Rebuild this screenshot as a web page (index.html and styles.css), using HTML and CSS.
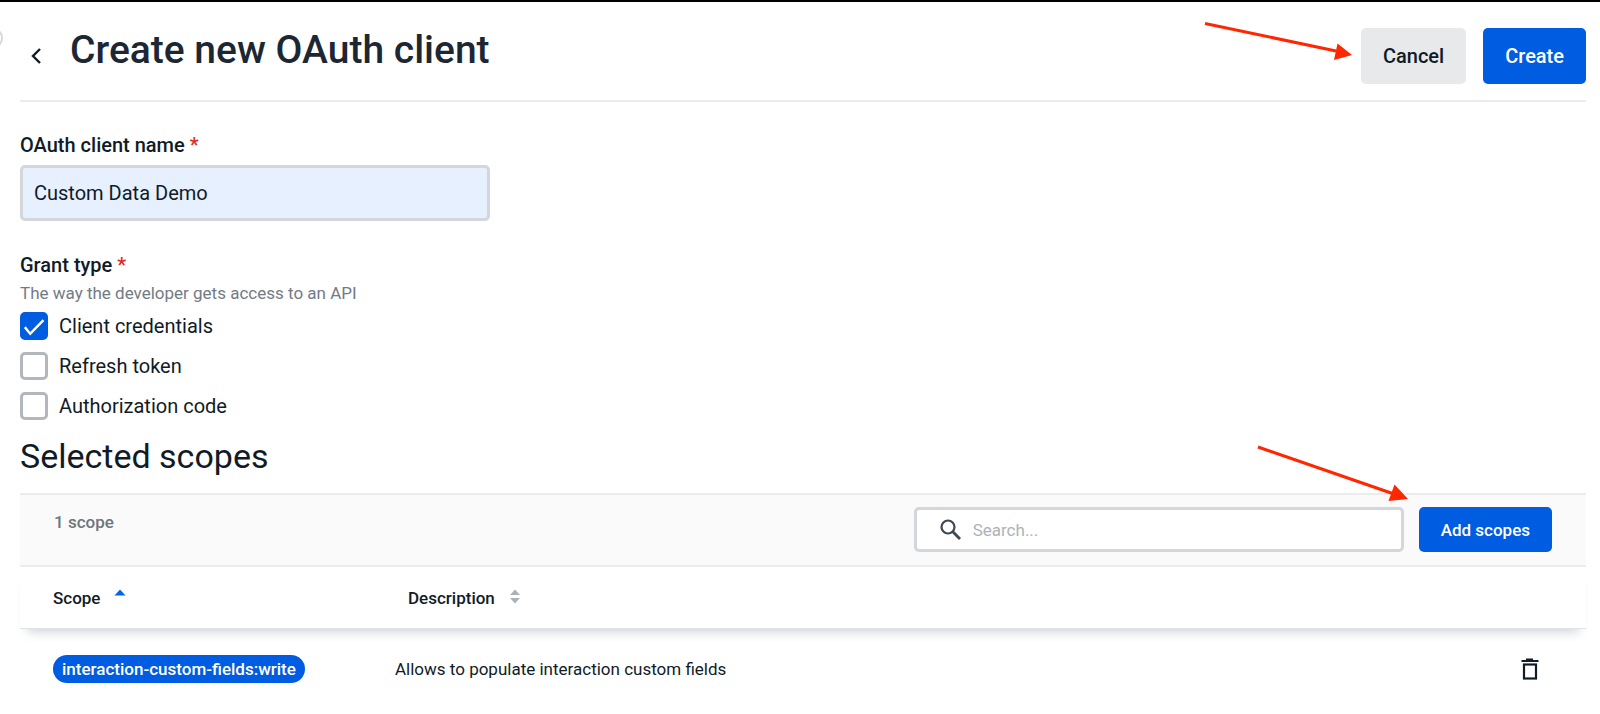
FILE: index.html
```html
<!DOCTYPE html>
<html lang="en">
<head>
<meta charset="utf-8">
<title>Create new OAuth client</title>
<link rel="stylesheet" href="styles.css">
</head>
<body>
<span class="rail-toggle"></span>
<main class="page">
  <header class="page-header">
    <button class="back" type="button" aria-label="Back">
      <svg width="10" height="16" viewBox="0 0 10 16"><path d="M9 1 L2 8 L9 15" fill="none" stroke="currentColor" stroke-width="2.4"/></svg>
    </button>
    <h1 class="title">Create new OAuth client</h1>
    <div class="actions">
      <button class="btn btn-secondary" type="button">Cancel</button>
      <button class="btn btn-primary" type="submit" form="client">Create</button>
      <svg class="arrow arrow-cancel" width="150" height="40" viewBox="0 0 150 40"><path d="M3 3.5 L134 31" stroke="#ff2600" stroke-width="3"/><path d="M135.500 23.500 L150 35 L132 40 Z" fill="#ff2600"/></svg>
    </div>
  </header>

  <form id="client" class="form">
    <label class="label" for="name">OAuth client name <span class="required">*</span></label>
    <input class="text-input" id="name" type="text" value="Custom Data Demo">
    <fieldset class="grant">
      <legend class="label">Grant type <span class="required">*</span></legend>
      <p class="hint">The way the developer gets access to an API</p>
      <label class="option"><input class="check" type="checkbox" checked>Client credentials</label>
      <label class="option"><input class="check" type="checkbox">Refresh token</label>
      <label class="option"><input class="check" type="checkbox">Authorization code</label>
    </fieldset>
  </form>

  <section class="scopes">
    <h2 class="subtitle">Selected scopes</h2>
    <div class="toolbar">
      <span class="count">1 scope</span>
      <label class="search">
        <svg width="22" height="22" viewBox="0 0 22 22"><circle cx="8" cy="8" r="6.500" fill="none" stroke="currentColor" stroke-width="2.2"/><path d="M12.600 12.600 L20 20" stroke="currentColor" stroke-width="2.8"/></svg>
        <input class="search-input" type="search" placeholder="Search..." aria-label="Search">
      </label>
      <div class="add">
        <button class="btn btn-primary btn-small" type="button">Add scopes</button>
        <svg class="arrow arrow-add" width="152" height="60" viewBox="0 0 152 60"><path d="M2 3 L138 50" stroke="#ff2600" stroke-width="3"/><path d="M138.500 40.500 L152 55 L132.500 57 Z" fill="#ff2600"/></svg>
      </div>
    </div>
    <table class="table">
      <thead>
        <tr>
          <th class="col-scope">Scope<svg class="sort sort-active" width="12" height="15" viewBox="0 0 12 15"><path d="M0.500 6.500 L6 0.500 L11.500 6.500 Z" fill="currentColor"/></svg></th>
          <th class="col-desc">Description<svg class="sort" width="12" height="15" viewBox="0 0 12 15"><path d="M1 6 L6 0.500 L11 6 Z M1 9 L11 9 L6 14.500 Z" fill="currentColor"/></svg></th>
          <th class="col-action"></th>
        </tr>
      </thead>
      <tbody>
        <tr>
          <td class="col-scope"><span class="pill">interaction-custom-fields:write</span></td>
          <td>Allows to populate interaction custom fields</td>
          <td class="col-action">
            <button class="delete" type="button" aria-label="Delete scope">
              <svg width="18" height="22" viewBox="0 0 18 22"><path d="M5 0.500 H12 V2 H17.500 V4 H0.500 V2 H5 Z" fill="currentColor"/><rect x="3" y="6.500" width="12" height="14" fill="none" stroke="currentColor" stroke-width="2.2"/></svg>
            </button>
          </td>
        </tr>
      </tbody>
    </table>
  </section>
</main>
</body>
</html>
```
FILE: styles.css
```css
* { box-sizing: border-box; }

body {
  margin: 0;
  border-top: 2px solid #000;
  background: #fff;
  color: #111b26;
  font-family: Roboto, "Liberation Sans", sans-serif;
  font-size: 17px;
  overflow-x: hidden;
}

button, input { font: inherit; color: inherit; }
button { cursor: pointer; }

.rail-toggle {
  position: absolute;
  top: 27px;
  left: -19px;
  width: 22px;
  height: 22px;
  border: 2px solid #d5d9dc;
  border-radius: 50%;
}

.page { padding: 0 14px 0 20px; }

.page-header {
  display: flex;
  align-items: flex-start;
  height: 100px;
  padding-top: 26px;
  border-bottom: 2px solid #ebecee;
}

.back {
  display: flex;
  margin-top: 20px;
  padding: 0 11px;
  border: 0;
  background: none;
}

.title {
  margin: 0 0 0 18px;
  font-size: 39px;
  line-height: 44px;
  font-weight: 500;
  color: #1c2733;
}

.actions {
  position: relative;
  display: flex;
  gap: 17px;
  margin-left: auto;
}

.btn {
  height: 56px;
  padding: 0 22px;
  border: 0;
  border-radius: 5px;
  font-size: 20px;
  font-weight: 500;
}
.btn-secondary { background: #e8e9eb; }
.btn-primary { background: #005ce0; color: #fff; }
.btn-small { height: 45px; font-size: 17px; }

.arrow {
  position: absolute;
  pointer-events: none;
}
.arrow-cancel { right: calc(100% + 9px); top: -8px; }
.arrow-add { right: calc(100% + 11px); bottom: 48px; }

.form { padding-top: 31px; }

.label {
  display: block;
  padding: 0;
  font-size: 20px;
  line-height: 24px;
  font-weight: 500;
}
.required { color: #e02a1b; }

.text-input {
  display: block;
  width: 30%;
  height: 56px;
  margin-top: 8px;
  padding: 0 11px;
  border: 3px solid #d3d7db;
  border-radius: 5px;
  background: #e6f0fe;
  font-size: 20px;
}

.grant {
  min-width: 0;
  margin: 32px 0 0;
  padding: 0;
  border: 0;
}

.hint {
  margin: 4px 0 7px;
  line-height: 24px;
  color: #727b84;
}

.option {
  display: flex;
  align-items: center;
  gap: 11px;
  width: fit-content;
  height: 28px;
  margin-bottom: 12px;
  font-size: 20px;
}

.check {
  appearance: none;
  display: grid;
  width: 28px;
  height: 28px;
  margin: 0;
  border: 3px solid #b1b7bc;
  border-radius: 5px;
  background: #fff;
}
.check:checked { border: 2px solid #005ce0; background: #005ce0; }
.check:checked::before {
  content: "";
  background: #fff;
  clip-path: polygon(8% 58%, 16% 51%, 34% 75%, 86% 22%, 93% 29%, 34% 90%);
}

.subtitle {
  margin: 3px 0 16px;
  font-size: 34px;
  line-height: 42px;
  font-weight: 400;
}

.toolbar {
  display: flex;
  align-items: flex-start;
  height: 74px;
  padding: 12px 34px 0;
  border: solid #ebecee;
  border-width: 2px 0;
  background: #fafafa;
}

.count {
  line-height: 30px;
  font-weight: 500;
  color: #6c757e;
}

.search {
  display: flex;
  align-items: center;
  gap: 11px;
  width: 490px;
  height: 45px;
  margin: 0 15px 0 auto;
  padding: 0 23px;
  border: 3px solid #d3d7db;
  border-radius: 5px;
  background: #fff;
  color: #3d4853;
}

.search-input {
  flex: 1;
  min-width: 0;
  padding: 0;
  border: 0;
  outline: 0;
  background: none;
}
.search-input::placeholder { color: #adb2b7; }

.add { position: relative; }

.table {
  width: 100%;
  border-spacing: 0;
  table-layout: fixed;
  text-align: left;
}
.table thead tr { box-shadow: 0 10px 10px -7px #cfd3d7; }
.table th {
  height: 62px;
  padding: 0;
  border-bottom: 1px solid #e0e2e5;
  font-weight: 500;
}
.table td { height: 80px; padding: 0; }
.table .col-scope { width: 375px; padding-left: 33px; }
.table .col-desc { padding-left: 13px; }
.table .col-action { width: 80px; }

.sort {
  margin-left: 14px;
  color: #aab1b8;
}
.sort-active { color: #0066e8; }

.pill {
  display: inline-block;
  padding: 0 9px;
  border-radius: 14px;
  background: #005ce0;
  color: #fff;
  line-height: 28px;
  font-weight: 500;
}

.delete {
  display: flex;
  margin-left: 15px;
  padding: 0;
  border: 0;
  background: none;
}
```
